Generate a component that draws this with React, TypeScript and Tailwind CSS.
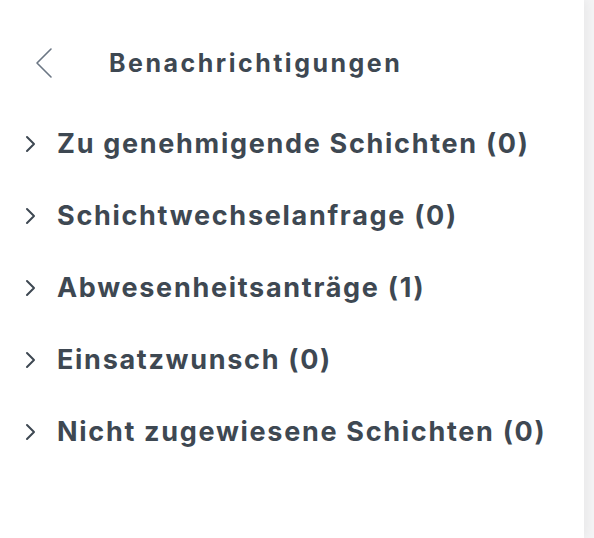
const groups = [
  { label: 'Zu genehmigende Schichten', count: 0 },
  { label: 'Schichtwechselanfrage', count: 0 },
  { label: 'Abwesenheitsanträge', count: 1 },
  { label: 'Einsatzwunsch', count: 0 },
  { label: 'Nicht zugewiesene Schichten', count: 0 },
];

export default function App() {
  return (
    <div className="h-[538px] w-full overflow-hidden bg-[#f4f4f5] font-['Inter',sans-serif] text-[#3e4852]">
      <div className="h-full w-[584px] bg-white shadow-[3px_0_10px_rgba(0,0,0,0.05)]">
        <div className="flex flex-row items-center pt-[47px]">
          <button className="ml-[34px] flex h-8 w-5 items-center justify-center">
            <svg width="20" height="32" viewBox="0 0 20 32" fill="none">
              <polyline
                points="17,2 3,16 17,30"
                stroke="#6b7684"
                strokeWidth="1.6"
                strokeLinecap="round"
                strokeLinejoin="round"
              />
            </svg>
          </button>
          <h1 className="ml-[55px] text-[25px] font-bold leading-none tracking-[2.5px]">Benachrichtigungen</h1>
        </div>

        <ul className="mt-[47px] flex flex-col gap-[37px]">
          {groups.map(({ label, count }) => (
            <li key={label} className="flex h-[35px] flex-row items-center">
              <svg width="12" height="18" viewBox="0 0 12 18" fill="none" className="ml-[24px]">
                <polyline
                  points="3,2 10,9 3,16"
                  stroke="#3e4852"
                  strokeWidth="2"
                  strokeLinecap="round"
                  strokeLinejoin="round"
                />
              </svg>
              <span className="ml-[21px] text-[27px] font-bold leading-none tracking-[1.7px]">
                {label} ({count})
              </span>
            </li>
          ))}
        </ul>
      </div>
    </div>
  );
}
